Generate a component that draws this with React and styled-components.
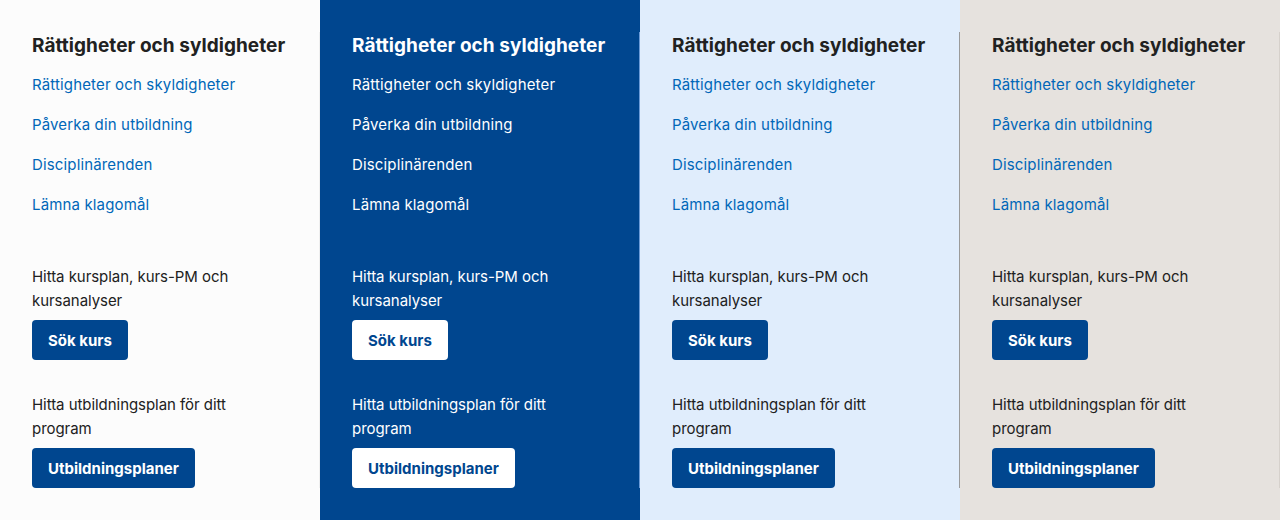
import React from "react";
import styled, { createGlobalStyle } from "styled-components";

const Global = createGlobalStyle`
  html, body { margin: 0; padding: 0; }
  body { font-family: Inter, "Noto Sans", sans-serif; -webkit-font-smoothing: antialiased; }
`;

const themes = {
  white: { bg: "#fcfcfc", heading: "#212121", link: "#0067b8", text: "#212121", border: "#efefef", btnBg: "#00468f", btnText: "#ffffff" },
  blue: { bg: "#00468f", heading: "#ffffff", link: "#ffffff", text: "#ffffff", border: "#6c9bd8", btnBg: "#ffffff", btnText: "#00468f" },
  light: { bg: "#e0edfc", heading: "#212121", link: "#0067b8", text: "#212121", border: "#9a9a9a", btnBg: "#00468f", btnText: "#ffffff" },
  sand: { bg: "#e6e2de", heading: "#212121", link: "#0067b8", text: "#212121", border: "#d6d1cc", btnBg: "#00468f", btnText: "#ffffff" },
};

const Row = styled.div`
  display: grid;
  grid-template-columns: repeat(4, 320px);
  width: 1280px;
`;

const Column = styled.section`
  background: ${(p) => p.$t.bg};
  padding: 32px 0 32px 32px;
`;

const Inner = styled.div`
  border-right: 1px solid ${(p) => p.$t.border};
  padding-right: 32px;
  height: 456px;
  box-sizing: border-box;
`;

const Heading = styled.h2`
  margin: 0 0 6px;
  padding-top: 2px;
  font-size: 19px;
  line-height: 24px;
  font-weight: 700;
  letter-spacing: 0.05px;
  color: ${(p) => p.$t.heading};
`;

const LinkList = styled.ul`
  list-style: none;
  margin: 0 0 40px;
  padding: 0;
`;

const LinkItem = styled.li`
  height: 40px;
  padding-top: 2px;
  box-sizing: border-box;
  display: flex;
  align-items: center;
`;

const Link = styled.a`
  font-size: 15px;
  line-height: 24px;
  color: ${(p) => p.$t.link};
  text-decoration: none;
  letter-spacing: 0.15px;
`;

const Text = styled.p`
  margin: 0 0 7px;
  padding-top: 1px;
  font-size: 15px;
  line-height: 24px;
  letter-spacing: -0.05px;
  color: ${(p) => p.$t.text};
`;

const Button = styled.button`
  display: inline-flex;
  align-items: center;
  height: 40px;
  padding: 0 16px;
  border: none;
  border-radius: 4px;
  background: ${(p) => p.$t.btnBg};
  color: ${(p) => p.$t.btnText};
  font-family: inherit;
  font-size: 15px;
  font-weight: 700;
  letter-spacing: 0;
  margin-bottom: ${(p) => (p.$last ? 0 : 32)}px;
`;

const Block = styled.div``;

const links = ["Rättigheter och skyldigheter", "Påverka din utbildning", "Disciplinärenden", "Lämna klagomål"];

function Panel({ t }) {
  return (
    <Column $t={t}>
      <Inner $t={t}>
        <Heading $t={t}>Rättigheter och syldigheter</Heading>
        <LinkList>
          {links.map((l) => (
            <LinkItem key={l}>
              <Link $t={t} href="#">{l}</Link>
            </LinkItem>
          ))}
        </LinkList>
        <Block>
          <Text $t={t}>Hitta kursplan, kurs-PM och kursanalyser</Text>
          <Button $t={t}>Sök kurs</Button>
        </Block>
        <Block>
          <Text $t={t}>Hitta utbildningsplan för ditt program</Text>
          <Button $t={t} $last>Utbildningsplaner</Button>
        </Block>
      </Inner>
    </Column>
  );
}

export default function App() {
  return (
    <>
      <Global />
      <Row>
        <Panel t={themes.white} />
        <Panel t={themes.blue} />
        <Panel t={themes.light} />
        <Panel t={themes.sand} />
      </Row>
    </>
  );
}
